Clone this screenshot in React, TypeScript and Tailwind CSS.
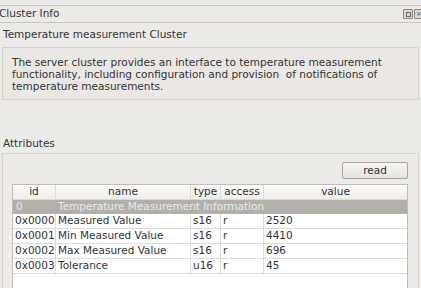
import React from "react";

type Attr = { id: string; name: string; type: string; access: string; value: string };

const attributes: Attr[] = [
    { id: "0x0000", name: "Measured Value", type: "s16", access: "r", value: "2520" },
    { id: "0x0001", name: "Min Measured Value", type: "s16", access: "r", value: "4410" },
    { id: "0x0002", name: "Max Measured Value", type: "s16", access: "r", value: "696" },
    { id: "0x0003", name: "Tolerance", type: "u16", access: "r", value: "45" },
];

const cell = "h-[15px] border-r border-b border-[#dcdad6] px-[2px] flex items-center whitespace-nowrap overflow-hidden";

const App: React.FC = () => {
    return (
        <div className="w-[421px] h-[288px] overflow-hidden bg-[#edebe7] text-[#2e3436] text-[10.5px] font-['DejaVu_Sans',sans-serif]">
            <div className="h-[5px]" />
            {/* dock title */}
            <div className="h-[18px] border-t border-b border-[#c8c4be] flex items-center justify-between">
                <span className="ml-[-1px]">Cluster Info</span>
                <div className="flex items-center gap-[1px] mr-[-3px]">
                    <span className="w-[10px] h-[10px] border border-[#8a8682] bg-[#dcd9d4] rounded-[1px] flex items-center justify-center">
                        <span className="w-[5px] h-[5px] border border-[#6a6662]" />
                    </span>
                    <span className="w-[10px] h-[10px] border border-[#8a8682] bg-[#dcd9d4] rounded-[1px] flex items-center justify-center text-[7px] leading-none text-[#55524e]">
                        ×
                    </span>
                </div>
            </div>

            <div className="px-[2px]">
                <div className="pl-[1px] h-[24px] flex items-center">Temperature measurement Cluster</div>
                <div className="border border-[#d5d1cc] bg-[#ebe8e4] pl-[9px] pr-2 pt-[8px] pb-[9px] leading-[12px] h-[53px]">
                    The server cluster provides an interface to temperature measurement<br />
                    functionality, including configuration and provision&nbsp; of notifications of<br />
                    temperature measurements.
                </div>

                <div className="h-[35px]" />
                <div className="pl-[1px] h-[18px] flex items-center">Attributes</div>

                <div className="border border-[#d5d1cc] h-[140px] px-[9px] pt-[8px]">
                    <div className="flex justify-end pr-[1px]">
                        <button className="w-[66px] h-[17px] border border-[#a8a49f] rounded-[2px] bg-gradient-to-b from-[#f7f6f4] to-[#e6e3df] text-[#2e3436] leading-none">
                            read
                        </button>
                    </div>
                    <div className="mt-[5px] w-[396px] h-[120px] bg-white border border-[#c0bcb7]">
                        <div className="grid grid-cols-[43px_135px_30px_43px_1fr] bg-gradient-to-b from-[#fbfbfa] to-[#efedea] text-center">
                            <div className={cell + " justify-center"}>id</div>
                            <div className={cell + " justify-center"}>name</div>
                            <div className={cell + " justify-center"}>type</div>
                            <div className={cell + " justify-center"}>access</div>
                            <div className={cell + " justify-center border-r-0"}>value</div>
                        </div>
                        <div className="h-[14px] bg-[#b3b0ac] text-[#ebeae8] flex items-center whitespace-nowrap">
                            <span className="w-[43px] pl-[3px]">0</span>
                            <span className="pl-[2px]">Temperature Measurement Information</span>
                        </div>
                        {attributes.map((a) => (
                            <div key={a.id} className="grid grid-cols-[43px_135px_30px_43px_1fr]">
                                <div className={cell}>{a.id}</div>
                                <div className={cell}>{a.name}</div>
                                <div className={cell}>{a.type}</div>
                                <div className={cell}>{a.access}</div>
                                <div className={cell + " border-r-0"}>{a.value}</div>
                            </div>
                        ))}
                    </div>
                </div>
            </div>
        </div>
    );
};

export default App;
